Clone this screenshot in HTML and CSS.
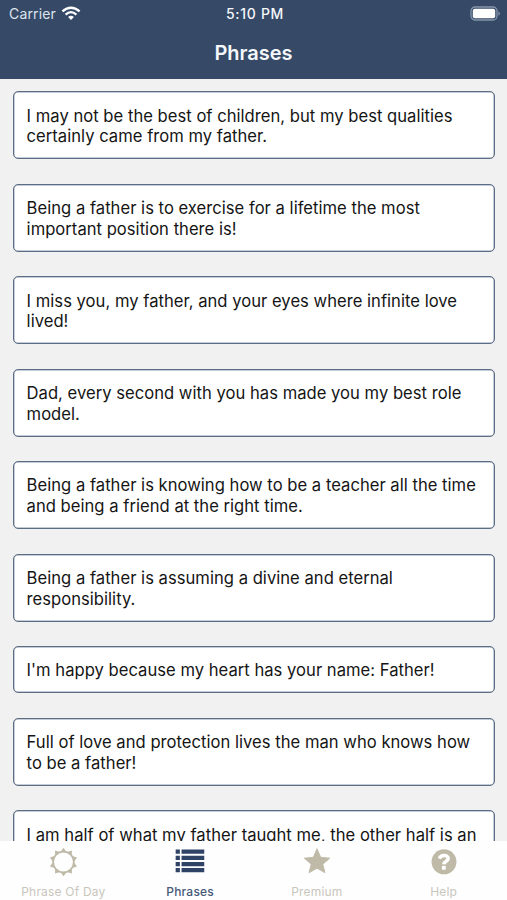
FILE: index.html
```html
<!DOCTYPE html>
<html lang="en">
<head>
<meta charset="utf-8" />
<title>Phrases</title>
<link rel="stylesheet" href="styles.css">
</head>
<body>
<div class="header">
	<div class="status">
		<div class="carrier">
			<span>Carrier</span>
			<svg width="20" height="15" viewBox="0 0 20 15">
				<path d="M1.4 5.4 Q10 -2 18.6 5.4" fill="none" stroke="#fff" stroke-width="2.4" />
				<path d="M4.6 8.6 Q10 3.6 15.4 8.6" fill="none" stroke="#fff" stroke-width="2.2" />
				<path d="M7.1 11 Q10 8.6 12.9 11 L10 14 Z" fill="#fff" />
			</svg>
		</div>
		<div class="time">5:10 PM</div>
		<div class="battery">
			<svg width="31" height="15" viewBox="0 0 31 15">
				<rect x="1" y="1" width="26" height="13" rx="4" fill="none" stroke="#8595ab" stroke-width="1.3" />
				<rect x="2.8" y="2.8" width="22.4" height="9.4" rx="2" fill="#fff" />
				<path d="M28.4 5.2 Q31.4 7.5 28.4 9.8 Z" fill="#8595ab" />
			</svg>
		</div>
	</div>
	<h1>Phrases</h1>
</div>
<ul class="list">
	<li>I may not be the best of children, but my best qualities<br />certainly came from my father.</li>
	<li>Being a father is to exercise for a lifetime the most<br />important position there is!</li>
	<li>I miss you, my father, and your eyes where infinite love<br />lived!</li>
	<li>Dad, every second with you has made you my best role<br />model.</li>
	<li>Being a father is knowing how to be a teacher all the time<br />and being a friend at the right time.</li>
	<li>Being a father is assuming a divine and eternal<br />responsibility.</li>
	<li>I'm happy because my heart has your name: Father!</li>
	<li>Full of love and protection lives the man who knows how<br />to be a father!</li>
	<li>I am half of what my father taught me, the other half is an</li>
</ul>
<div class="tabs">
	<div class="tab">
		<svg width="32" height="32" viewBox="-16.5 -16 32 32">
			<circle r="11" fill="none" stroke="#bfbaa8" stroke-width="1.8" />
			<g fill="#bfbaa8">
				<path id="ray" d="M-3.2 -10.8 L0 -15.2 L3.2 -10.8 Z" />
				<use href="#ray" transform="rotate(36)" />
				<use href="#ray" transform="rotate(72)" />
				<use href="#ray" transform="rotate(108)" />
				<use href="#ray" transform="rotate(144)" />
				<use href="#ray" transform="rotate(180)" />
				<use href="#ray" transform="rotate(216)" />
				<use href="#ray" transform="rotate(252)" />
				<use href="#ray" transform="rotate(288)" />
				<use href="#ray" transform="rotate(324)" />
			</g>
		</svg>
		<span>Phrase Of Day</span>
	</div>
	<div class="tab on">
		<svg width="32" height="32" viewBox="0 0 32 32">
			<path fill="#2f4367" d="M.7 2.7h4.5v4.5H.7zM.7 9.3h4.5v4.5H.7zM.7 15.9h4.5v4.5H.7zM.7 22.4h4.5v4.5H.7zM7 2.7h24.2v4.5H7zM7 9.3h24.2v4.5H7zM7 15.9h24.2v4.5H7zM7 22.4h24.2v4.5H7z" />
		</svg>
		<span>Phrases</span>
	</div>
	<div class="tab">
		<svg width="32" height="32" viewBox="0 0 32 32">
			<path fill="#bfbaa8" stroke="#bfbaa8" stroke-linejoin="round" d="M16 1.8 L19.9 11 L29.6 11.9 L22.2 18.3 L24.5 27.4 L16 22.6 L7.5 27.4 L9.8 18.3 L2.4 11.9 L12.1 11 Z" />
		</svg>
		<span>Premium</span>
	</div>
	<div class="tab">
		<svg width="32" height="32" viewBox="0 0 32 32">
			<circle cx="16" cy="15.8" r="13.3" fill="#bfbaa8" />
			<path d="M11.2 12.4 C12.6 7.8 20.8 8.3 20.4 12.5 C20.1 15.3 16 15.1 15.8 18.6" fill="none" stroke="#fff" stroke-width="3.8" />
			<rect x="13.8" y="20.2" width="4" height="4" fill="#fff" />
		</svg>
		<span>Help</span>
	</div>
</div>
</body>
</html>
```
FILE: styles.css
```css
body{ margin:0; height:900px; overflow:hidden; display:flex; flex-direction:column; background:#f1f1f1; color:#151515; font-family:Inter,"Liberation Sans",sans-serif; }

.header{ flex:none; height:79px; background:#364a67; color:#f4f7fb; }
.status{ display:grid; grid-template-columns:1fr auto 1fr; align-items:center; height:26px; padding:0 6px 0 9px; font-size:14px; }
.carrier{ display:flex; align-items:center; gap:5px; color:#dde4ee; letter-spacing:.15px; }
.time{ font-weight:500; letter-spacing:.7px; }
.battery{ display:flex; justify-content:flex-end; }
.header h1{ margin:0; padding-top:14px; font-size:20px; line-height:26px; font-weight:600; text-align:center; }

ul.list{ flex:1; min-height:0; overflow:hidden; margin:0; padding:12.4px 12px 0 13px; list-style:none; }
ul.list li{ margin-bottom:24.4px; padding:13.2px 0 11.3px 12.6px; border:1px solid #5c6e86; border-radius:5px; box-shadow:inset 0 0 0 .5px #8c9aad; background:#fff; font-size:16.6px; letter-spacing:.02px; line-height:20.8px; white-space:nowrap; }

.tabs{ flex:none; display:flex; height:59px; background:#fefefe; }
.tab{ flex:1; display:flex; flex-direction:column; align-items:center; padding-top:6px; color:#c9c6bd; font-size:12px; letter-spacing:.2px; }
.tab span{ margin-top:6px; line-height:17px; }
.on{ color:#465878; }
.on span{ font-weight:500; }
```
